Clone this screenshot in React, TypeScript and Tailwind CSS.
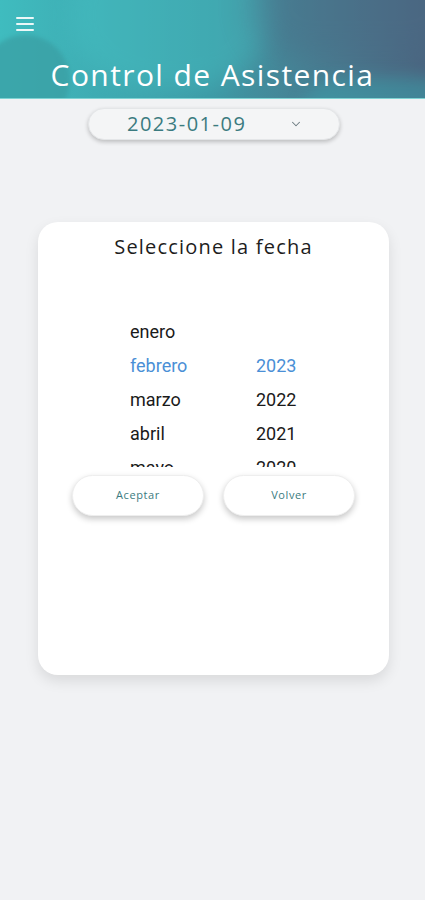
import React from "react";
import { ChevronDown } from "lucide-react";

const months = ["enero", "febrero", "marzo", "abril", "mayo"];
const years = ["", "2023", "2022", "2021", "2020"];

export default function App() {
    return (
        <div className="min-h-[900px] bg-[#f1f2f4] font-['Open_Sans',sans-serif]">
            {/* Header */}
            <div className="relative h-[99px] overflow-hidden bg-gradient-to-r from-[#3fbcbf] via-[#3d98a4] to-[#4a6580] border-b border-[#7fd3d3]">
                <div className="absolute -left-[20px] top-[35px] w-[90px] h-[90px] rounded-full bg-[#3a9ea3] opacity-70 blur-[2px]"></div>
                <div className="absolute left-[70px] -top-[60px] w-[200px] h-[150px] rounded-[45%] bg-[#46c4c6] opacity-40 blur-md"></div>
                <div className="absolute left-[250px] -top-[50px] w-[220px] h-[110px] rounded-full bg-[#4c6a85] opacity-40 blur-lg"></div>
                <div className="absolute left-[300px] top-[78px] w-[160px] h-[80px] rounded-full bg-[#3aa3ad] opacity-50 blur-sm"></div>
                <div className="relative flex flex-col h-full">
                    <div className="pl-[16px] pt-[17px]">
                        <div className="flex flex-col gap-[4px] w-[18px]">
                            <span className="h-[2px] bg-white/90 rounded"></span>
                            <span className="h-[2px] bg-white/90 rounded"></span>
                            <span className="h-[2px] bg-white/90 rounded"></span>
                        </div>
                    </div>
                    <div className="flex-1 flex items-end justify-center pb-[3px]">
                        <h1 className="text-white text-[30px] leading-[40px] tracking-[1.4px]">
                            Control de Asistencia
                        </h1>
                    </div>
                </div>
            </div>

            {/* Date selector */}
            <div className="flex justify-center pt-[9px] pl-[3px]">
                <div className="w-[252px] h-[32px] rounded-full bg-[#f4f5f6] border border-[#e4e6e8] shadow-[0_2px_4px_rgba(0,0,0,0.22)] flex items-center">
                    <span className="ml-[38px] text-[20px] text-[#3b7b80] tracking-[1.5px]">2023-01-09</span>
                    <ChevronDown className="ml-[43px] w-[14px] h-[14px] text-[#6b7a80]" strokeWidth={1.8} />
                </div>
            </div>

            {/* Card */}
            <div className="px-[38px] pt-[82px] pr-[36px]">
                <div className="h-[453px] bg-white rounded-[20px] shadow-[0_6px_14px_rgba(0,0,0,0.10)] flex flex-col">
                    <h2 className="text-center text-[20px] text-[#1d1d1d] pt-[11px] leading-[28px] tracking-[1.2px]">
                        Seleccione la fecha
                    </h2>
                    <div className="mt-[53px] h-[153px] overflow-hidden flex font-['Roboto',sans-serif] text-[18px]">
                        <div className="ml-[92px] w-[126px]">
                            {months.map((m, i) => (
                                <div key={m} className={`h-[34px] flex items-center ${i === 1 ? "text-[#4a8fd6]" : "text-[#1a1a1a]"}`}>
                                    {m}
                                </div>
                            ))}
                        </div>
                        <div>
                            {years.map((y, i) => (
                                <div key={i} className={`h-[34px] flex items-center ${i === 1 ? "text-[#4a8fd6]" : "text-[#1a1a1a]"}`}>
                                    {y}
                                </div>
                            ))}
                        </div>
                    </div>
                    <div className="flex gap-[19px] pl-[34px] mt-[8px]">
                        <button className="w-[132px] h-[41px] rounded-full bg-white border border-[#eeeeee] shadow-[0_3px_6px_rgba(0,0,0,0.22)] text-[11px] text-[#3b7b80] tracking-[0.6px]">
                            Aceptar
                        </button>
                        <button className="w-[132px] h-[41px] rounded-full bg-white border border-[#eeeeee] shadow-[0_3px_6px_rgba(0,0,0,0.22)] text-[11px] text-[#3b7b80] tracking-[0.6px]">
                            Volver
                        </button>
                    </div>
                </div>
            </div>
        </div>
    );
}
